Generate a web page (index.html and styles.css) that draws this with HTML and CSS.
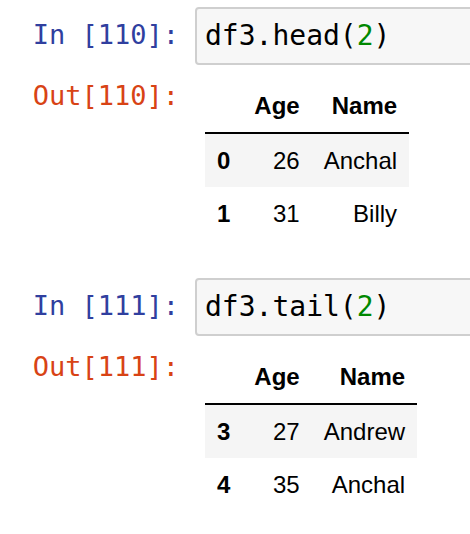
FILE: index.html
```html
<!DOCTYPE html>
<html lang="en">
<head>
<meta charset="utf-8">
<title>Notebook cells</title>
<link rel="stylesheet" href="styles.css">
</head>
<body>
<div class="notebook">
  <div class="cell">
    <div class="input">
      <div class="prompt in-prompt">In&nbsp;[110]:</div>
      <div class="input-area"><span class="code">df3.head(<span class="num">2</span>)</span></div>
    </div>
    <div class="output">
      <div class="prompt out-prompt">Out[110]:</div>
      <div class="output-area">
        <table class="dataframe">
          <thead>
            <tr><th></th><th>Age</th><th>Name</th></tr>
          </thead>
          <tbody>
            <tr><th>0</th><td>26</td><td>Anchal</td></tr>
            <tr><th>1</th><td>31</td><td>Billy</td></tr>
          </tbody>
        </table>
      </div>
    </div>
  </div>
  <div class="cell">
    <div class="input">
      <div class="prompt in-prompt">In&nbsp;[111]:</div>
      <div class="input-area"><span class="code">df3.tail(<span class="num">2</span>)</span></div>
    </div>
    <div class="output">
      <div class="prompt out-prompt">Out[111]:</div>
      <div class="output-area">
        <table class="dataframe">
          <thead>
            <tr><th></th><th>Age</th><th>Name</th></tr>
          </thead>
          <tbody>
            <tr><th>3</th><td>27</td><td>Andrew</td></tr>
            <tr><th>4</th><td>35</td><td>Anchal</td></tr>
          </tbody>
        </table>
      </div>
    </div>
  </div>
</div>
</body>
</html>
```
FILE: styles.css
```css
html, body {
  margin: 0;
  padding: 0;
  background: #ffffff;
  overflow: hidden;
}

.notebook {
  width: 480px;
}

.cell {
  display: flex;
  flex-direction: column;
  padding: 7px 0 31px;
}

.input,
.output {
  display: flex;
  flex-direction: row;
  align-items: flex-start;
}

.prompt {
  flex: 0 0 195px;
  box-sizing: border-box;
  text-align: right;
  padding-right: 16px;
  font-family: "DejaVu Sans Mono", monospace;
  font-size: 27px;
  line-height: 34px;
  white-space: nowrap;
}

.in-prompt {
  color: #303f9f;
  padding-top: 11px;
}

.out-prompt {
  color: #d84315;
  padding-top: 14px;
}

.input-area {
  flex: 1 1 auto;
  border: 2px solid #cfcfcf;
  border-radius: 4px;
  background: #f7f7f7;
  padding: 10px 0 10px 8px;
  box-sizing: border-box;
  height: 58px;
  font-family: "DejaVu Sans Mono", monospace;
  font-size: 28px;
  line-height: 34px;
  color: #000000;
}

.num {
  color: #008800;
}

.output-area {
  padding: 14px 0 0 10px;
}

.dataframe {
  border-collapse: collapse;
  border-spacing: 0;
  font-family: "Liberation Sans", Arial, sans-serif;
  font-size: 24px;
  color: #000000;
}

.dataframe th,
.dataframe td {
  text-align: right;
  vertical-align: middle;
  padding: 12px 12px;
  line-height: 29px;
  border: none;
}

.dataframe th {
  font-weight: bold;
}

.dataframe thead tr {
  border-bottom: 2px solid #000000;
}

.dataframe tbody tr:nth-child(odd) {
  background: #f5f5f5;
}
```
